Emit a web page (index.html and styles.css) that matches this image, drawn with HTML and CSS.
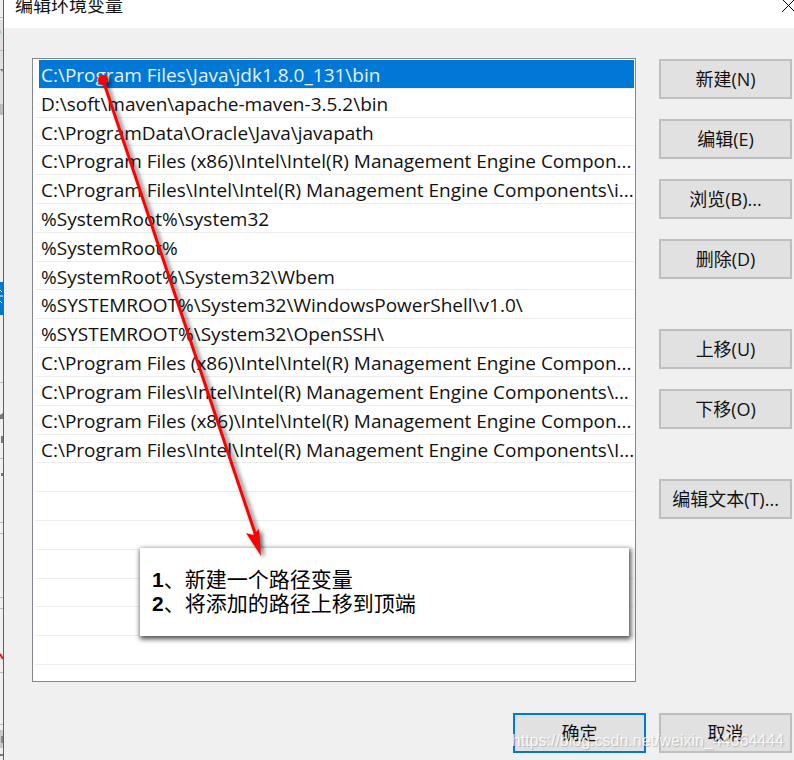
FILE: index.html
```html
<!DOCTYPE html>
<html lang="zh-CN">
<head>
<meta charset="utf-8">
<meta name="viewport" content="width=device-width, initial-scale=1">
<title>编辑环境变量</title>
<link rel="stylesheet" href="styles.css">
</head>
<body>
<div class="desktop">
  <div class="backdrop">
    <svg width="3" height="760" viewBox="0 0 3 760" aria-hidden="true">
      <path fill="#f0f0f0" d="M0 0h3v760H0z"/>
      <path fill="#e0e0e0" d="M0 20h3v84H0z"/>
      <path fill="#bcbcbc" d="M0 17h3v1H0zM0 50h3v1H0zM0 104h3v11H0zM0 382h3v1H0zM0 458h3v1H0zM0 522h3v1H0zM0 533h3v1H0zM0 597h3v1H0zM0 608h3v1H0zM0 672h3v1H0zM0 724h3v1H0z"/>
      <path fill="#777" d="M0 69h3l-1 3zM0 415l3-2v6H0zM1 436h2v7H1zM1 473h2v3H1zM0 754h3v2H0z"/>
      <path fill="#c8c8c8" d="M0 730h3v18H0z"/>
      <path fill="#888" d="M1 736h2v7H1z"/>
      <path fill="#0078d0" d="M0 282h3v33H0z"/>
      <path stroke="#fff" d="M0 290l2 2M0 296h3M0 301l2 2"/>
      <path stroke="#8fbfe0" d="M0 30l1 4"/>
      <path stroke="#d42020" stroke-width="2" d="M0 654l3 5"/>
    </svg>
  </div>
  <main class="dialog">
    <header class="titlebar">
      <h1 class="title">编辑环境变量</h1>
      <button class="close" type="button" aria-label="关闭">
        <svg width="15" height="15" viewBox="0 0 15 15"><path d="M1 1l13 13M14 1L1 14" stroke="#000" fill="none"/></svg>
      </button>
    </header>
    <div class="content">
      <div class="editor">
        <div class="list-box">
          <ul class="paths">
            <li class="selected">C:\Program Files\Java\jdk1.8.0_131\bin</li>
            <li>D:\soft\maven\apache-maven-3.5.2\bin</li>
            <li>C:\ProgramData\Oracle\Java\javapath</li>
            <li>C:\Program Files (x86)\Intel\Intel(R) Management Engine Compon...</li>
            <li>C:\Program Files\Intel\Intel(R) Management Engine Components\i...</li>
            <li>%SystemRoot%\system32</li>
            <li>%SystemRoot%</li>
            <li>%SystemRoot%\System32\Wbem</li>
            <li>%SYSTEMROOT%\System32\WindowsPowerShell\v1.0\</li>
            <li>%SYSTEMROOT%\System32\OpenSSH\</li>
            <li>C:\Program Files (x86)\Intel\Intel(R) Management Engine Compon...</li>
            <li>C:\Program Files\Intel\Intel(R) Management Engine Components\...</li>
            <li>C:\Program Files (x86)\Intel\Intel(R) Management Engine Compon...</li>
            <li>C:\Program Files\Intel\Intel(R) Management Engine Components\I...</li>
            <li></li><li></li><li></li><li></li><li></li><li></li><li></li>
          </ul>
          <div class="note">
            <p><b>1</b>、新建一个路径变量</p>
            <p><b>2</b>、将添加的路径上移到顶端</p>
          </div>
          <svg class="arrow" width="190" height="510" viewBox="0 0 190 510" aria-hidden="true">
            <g fill="#f00">
              <circle cx="10" cy="10" r="5"/>
              <path d="M10 10L163 466" stroke="#f00" stroke-width="3"/>
              <path d="M168 486L153 463l7 2 6-6z"/>
            </g>
          </svg>
        </div>
        <div class="actions">
          <button type="button">新建(N)</button>
          <button type="button">编辑(E)</button>
          <button type="button">浏览(B)...</button>
          <button type="button">删除(D)</button>
          <button type="button" class="group">上移(U)</button>
          <button type="button">下移(O)</button>
          <button type="button" class="group">编辑文本(T)...</button>
        </div>
      </div>
      <footer class="footer">
        <button type="button" class="default">确定</button>
        <button type="button">取消</button>
        <span class="watermark">https://blog.csdn.net/weixin_44364444</span>
      </footer>
    </div>
  </main>
</div>
</body>
</html>
```
FILE: styles.css
```css
* {
  box-sizing: border-box;
}

body {
  margin: 0;
  background: #f0f0f0;
  color: #111;
  font-family: "Open Sans", "Noto Sans CJK SC", sans-serif;
  font-size: 18px;
}

.desktop {
  display: flex;
  min-height: 100vh;
  overflow: hidden;
}

.backdrop {
  flex: none;
  width: 3px;
}

.backdrop svg {
  display: block;
}

.dialog {
  flex: 1;
  min-width: 0;
  border-left: 1px solid #1874b4;
  background: #f0f0f0;
}

.titlebar {
  display: flex;
  justify-content: space-between;
  height: 28px;
  padding-left: 11px;
  background: #fff;
}

.title {
  margin: 0;
  margin-top: -7px;
  font-size: 18px;
  font-weight: 400;
  line-height: 24px;
}

.close {
  width: 13px;
  height: 15px;
  margin-top: -2px;
  padding: 0;
  border: 0;
  background: none;
}

.close svg {
  display: block;
}

.content {
  padding: 30px 2px 7px 28px;
}

.editor {
  display: flex;
  gap: 23px;
}

.list-box {
  position: relative;
  flex: 1;
  min-width: 0;
  padding: 1px 1px 16px 2px;
  border: 1px solid #828790;
  background: #fff;
}

.paths {
  display: grid;
  grid-template-rows: repeat(21, 1fr);
  height: 605px;
  margin: 0;
  padding: 0;
  list-style: none;
}

.paths li {
  min-width: 0;
  padding-top: 1px;
  padding-left: 6px;
  border-bottom: 1px solid #ededed;
  font-size: 19px;
  line-height: 28px;
  white-space: nowrap;
  overflow: hidden;
}

.paths .selected {
  margin-left: 4px;
  padding-left: 2px;
  background: #0078d7;
  color: #e6f2fc;
}

.note {
  position: absolute;
  top: 489px;
  left: 107px;
  right: 6px;
  padding: 20px 12px;
  background: #fff;
  box-shadow: 1px 2px 5px 1px rgba(0, 0, 0, 0.7);
  color: #000;
  font-family: "Liberation Sans", "Noto Sans CJK SC", sans-serif;
  font-size: 21px;
  line-height: 24px;
}

.note p {
  margin: 0;
}

.arrow {
  position: absolute;
  top: 11px;
  left: 60px;
  filter: drop-shadow(3px 2px 2px rgba(0, 0, 0, 0.6));
}

.actions {
  display: flex;
  flex: none;
  flex-direction: column;
  gap: 20px;
  padding-top: 1px;
}

.actions button,
.footer button {
  width: 133px;
  height: 40px;
  padding: 0;
  border: 2px solid #bfbfbf;
  background: #e1e1e1;
  color: #111;
  font: inherit;
  line-height: 24px;
}

.actions .group {
  margin-top: 30px;
}

.footer {
  position: relative;
  display: flex;
  justify-content: flex-end;
  gap: 13px;
  margin-top: 31px;
}

.footer .default {
  border-color: #0078d7;
}

.watermark {
  position: absolute;
  right: 8px;
  bottom: 0;
  color: rgba(255, 255, 255, 0.85);
  font-family: "Liberation Sans", sans-serif;
  font-size: 16px;
  line-height: 24px;
  text-shadow: 1px 1px 1px rgba(0, 0, 0, 0.2);
}
```
